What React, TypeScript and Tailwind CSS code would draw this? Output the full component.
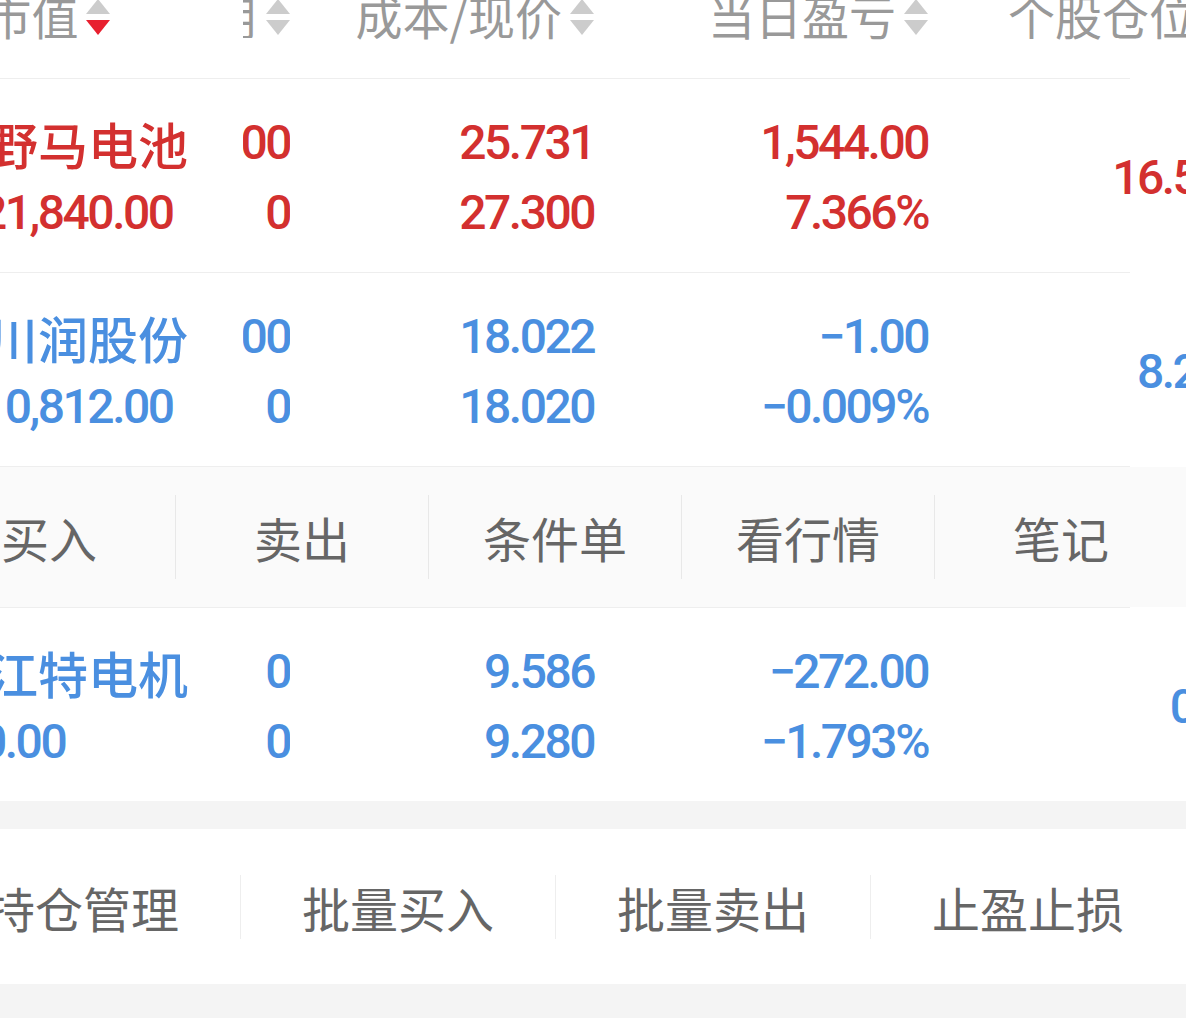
import React from 'react';

type Tone = 'up' | 'down';

interface Position {
  name: string;
  value: string;
  hold: string;
  avail: string;
  cost: string;
  price: string;
  pnl: string;
  pnlRate: string;
  ratio: string;
  tone: Tone;
}

const positions: Position[] = [
  { name: '野马电池', value: '21,840.00', hold: '800', avail: '0', cost: '25.731', price: '27.300', pnl: '1,544.00', pnlRate: '7.366%', ratio: '16.58%', tone: 'up' },
  { name: '川润股份', value: '10,812.00', hold: '600', avail: '0', cost: '18.022', price: '18.020', pnl: '−1.00', pnlRate: '−0.009%', ratio: '8.21%', tone: 'down' },
  { name: '江特电机', value: '0.00', hold: '0', avail: '0', cost: '9.586', price: '9.280', pnl: '−272.00', pnlRate: '−1.793%', ratio: '0.00', tone: 'down' },
];

const rowActions = ['买入', '卖出', '条件单', '看行情', '笔记'];
const bottomActions = ['持仓管理', '批量买入', '批量卖出', '止盈止损'];

const cjk = "[font-family:'Noto_Sans_CJK_SC',sans-serif]";
const num = "[font-family:'Roboto',sans-serif] text-[48px] font-medium tracking-[-2.5px]";

const SortIcon = ({ active }: { active?: boolean }) => (
  <span className="ml-[8px] -mt-[1px] flex shrink-0 flex-col items-center gap-[6px]">
    <span className="h-0 w-0 border-x-[12px] border-b-[15px] border-x-transparent border-b-[#cccccc]" />
    <span
      className={`h-0 w-0 border-x-[12px] border-t-[15px] border-x-transparent ${
        active ? 'border-t-[#e8202f]' : 'border-t-[#cccccc]'
      }`}
    />
  </span>
);

const HeaderText = ({ children, className = '' }: { children: React.ReactNode; className?: string }) => (
  <span className={`-mt-[9px] whitespace-nowrap text-[47px] leading-[47px] ${className}`}>{children}</span>
);

const Header = () => (
  <div className={`flex h-[78px] w-max items-start text-[#999999] ${cjk}`}>
    <div className="-ml-[20px] flex w-[263px] shrink-0 items-start">
      <HeaderText className="-ml-[108px]">名称/市值</HeaderText>
      <SortIcon active />
    </div>
    <div className="flex w-[47px] shrink-0 items-start justify-end overflow-hidden">
      <HeaderText>持仓/可用</HeaderText>
      <SortIcon />
    </div>
    <div className="flex w-[304px] shrink-0 items-start justify-end">
      <HeaderText>成本/现价</HeaderText>
      <SortIcon />
    </div>
    <div className="flex w-[334px] shrink-0 items-start justify-end">
      <HeaderText>当日盈亏</HeaderText>
      <SortIcon />
    </div>
    <div className="flex w-[327px] shrink-0 items-start pl-[80px]">
      <HeaderText>个股仓位</HeaderText>
      <SortIcon />
    </div>
  </div>
);

const Line = () => <div className="h-px mr-[56px] bg-[#eeeeee]" />;

const PositionRow = ({ p }: { p: Position }) => {
  const color = p.tone === 'up' ? 'text-[#d3302f]' : 'text-[#4a8fe0]';
  return (
    <div className={`flex h-[193px] w-max items-center pt-[5px] ${color}`}>
      <div className="-ml-[20px] flex w-[263px] shrink-0 flex-col items-start">
        <span className={`pl-[8px] text-[50px] font-medium leading-[70px] whitespace-nowrap ${cjk}`}>{p.name}</span>
        <span className={`leading-[70px] whitespace-nowrap ${num}`}>{p.value}</span>
      </div>
      <div className={`flex w-[47px] shrink-0 flex-col items-end overflow-hidden leading-[70px] ${num}`}>
        <span className="whitespace-nowrap">{p.hold}</span>
        <span className="whitespace-nowrap">{p.avail}</span>
      </div>
      <div className={`flex w-[304px] shrink-0 flex-col items-end leading-[70px] ${num}`}>
        <span>{p.cost}</span>
        <span>{p.price}</span>
      </div>
      <div className={`flex w-[334px] shrink-0 flex-col items-end leading-[70px] ${num}`}>
        <span>{p.pnl}</span>
        <span>{p.pnlRate}</span>
      </div>
      <div className={`flex w-[327px] shrink-0 justify-end leading-[70px] ${num}`}>
        <span>{p.ratio}</span>
      </div>
    </div>
  );
};

const ActionBar = () => (
  <div className="bg-[#fafafa]">
    <div className={`-ml-[77px] flex h-[140px] w-max items-center text-[48px] text-[#666666] ${cjk}`}>
      {rowActions.map((a, i) => (
        <React.Fragment key={a}>
          {i > 0 && <div className="h-[84px] w-px shrink-0 bg-[#e8e8e8]" />}
          <div className="flex w-[252px] shrink-0 justify-center whitespace-nowrap">{a}</div>
        </React.Fragment>
      ))}
    </div>
  </div>
);

const BottomBar = () => (
  <div className="bg-white">
    <div className={`-ml-[74px] flex h-[155px] w-max items-center text-[48px] text-[#666666] ${cjk}`}>
      {bottomActions.map((a, i) => (
        <React.Fragment key={a}>
          {i > 0 && <div className="h-[64px] w-px shrink-0 bg-[#eeeeee]" />}
          <div className="flex w-[314px] shrink-0 justify-center whitespace-nowrap">{a}</div>
        </React.Fragment>
      ))}
    </div>
  </div>
);

export default function App() {
  return (
    <div className="h-[1018px] w-[1186px] overflow-hidden bg-[#f4f4f4]">
      <div className="bg-white">
        <Header />
        <Line />
        <PositionRow p={positions[0]} />
        <Line />
        <PositionRow p={positions[1]} />
        <Line />
        <ActionBar />
        <Line />
        <PositionRow p={positions[2]} />
      </div>
      <div className="h-[28px]" />
      <BottomBar />
    </div>
  );
}
